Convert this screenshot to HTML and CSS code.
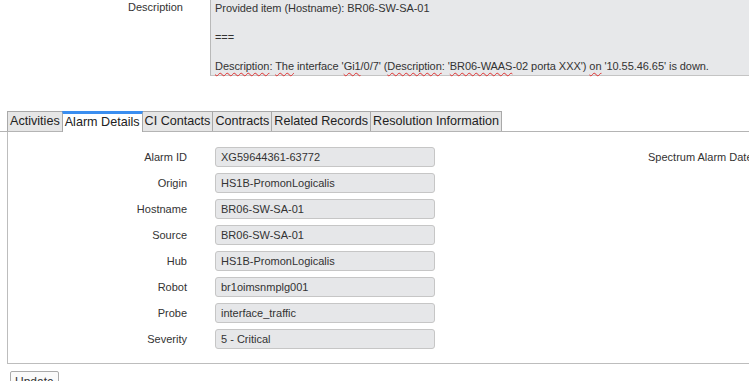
FILE: index.html
```html
<!DOCTYPE html>
<html lang="en">
<head>
  <meta charset="UTF-8">
  <title>Alarm Details</title>
  <link rel="stylesheet" href="styles.css">
</head>
<body>
  <div class="desc-row">
    <div class="desc-label">Description</div>
    <div class="desc-box">
      <div>Provided item (Hostname): BR06-SW-SA-01</div>
      <div>&nbsp;</div>
      <div>===</div>
      <div>&nbsp;</div>
      <div><span class="sp">Description</span>: <span class="sp">The</span> interface '<span class="sp">Gi1</span>/0/7' (<span class="sp">Description</span>: '<span class="sp">BR06-WAAS</span>-02 porta XXX') <span class="sp">on</span> '10.55.46.65' is down.</div>
    </div>
  </div>

  <div class="tabs">
    <div class="tab">Activities</div>
    <div class="tab active">Alarm Details</div>
    <div class="tab">CI Contacts</div>
    <div class="tab">Contracts</div>
    <div class="tab">Related Records</div>
    <div class="tab">Resolution Information</div>
  </div>

  <div class="panel">
    <div class="fields">
      <label>Alarm ID</label><div class="field">XG59644361-63772</div>
      <label>Origin</label><div class="field">HS1B-PromonLogicalis</div>
      <label>Hostname</label><div class="field">BR06-SW-SA-01</div>
      <label>Source</label><div class="field">BR06-SW-SA-01</div>
      <label>Hub</label><div class="field">HS1B-PromonLogicalis</div>
      <label>Robot</label><div class="field">br1oimsnmplg001</div>
      <label>Probe</label><div class="field">interface_traffic</div>
      <label>Severity</label><div class="field">5 - Critical</div>
    </div>
    <div class="side">
      <label>Spectrum Alarm Date</label>
    </div>
  </div>

  <button class="btn">Update</button>
</body>
</html>
```

FILE: styles.css
```css
body { margin:0; font-family:"Liberation Sans", Arial, sans-serif; font-size:11px; color:#333; background:#fff; overflow:hidden; }

.desc-row { display:flex; margin-top:-3px; }
.desc-label { width:183px; text-align:right; padding-top:4px; }
.desc-box { margin-left:27px; flex:1; background:#e7e8ea; border-left:1px solid #b9b9b9; border-bottom:1px solid #c4c4c4; padding:4px 4px 1px 4px; line-height:14.5px; white-space:nowrap; letter-spacing:-0.06px; }
.sp { text-decoration:underline wavy #e03030; text-decoration-thickness:1px; text-underline-offset:2px; }

.tabs { display:flex; margin-top:35px; padding-left:7px; border-bottom:1px solid #b4b4b4; height:20px; }
.tab { font-size:12.6px; line-height:18px; padding:0 2px; background:#e6e6e6; border:1px solid #a9a9a9; border-bottom:none; margin-right:-1px; color:#222; white-space:nowrap; }
.tab.active { background:#fff; border-top:3px solid #3a8ef0; line-height:16px; height:18px; margin-bottom:-1px; position:relative; }

.panel { display:flex; margin-left:7px; border-left:1px solid #bdbdbd; border-bottom:1px solid #bdbdbd; height:216px; padding-top:15px; }
.fields { display:grid; grid-template-columns:179px 220px; grid-auto-rows:20px; column-gap:28px; row-gap:6px; align-items:center; align-content:start; }
.fields label { text-align:right; }
.field { box-sizing:border-box; height:20px; line-height:18px; background:#e6e7e9; border:1px solid #c6c6c6; border-radius:3px; padding:0 5px; }
.side { margin-left:213px; padding-top:4px; white-space:nowrap; }

.btn { display:block; margin:7px 0 0 10px; font-family:"Liberation Sans", Arial, sans-serif; font-size:12px; color:#333; background:#fafafa; border:1px solid #aaa; border-radius:2px; padding:0 4px; height:22px; }
```
